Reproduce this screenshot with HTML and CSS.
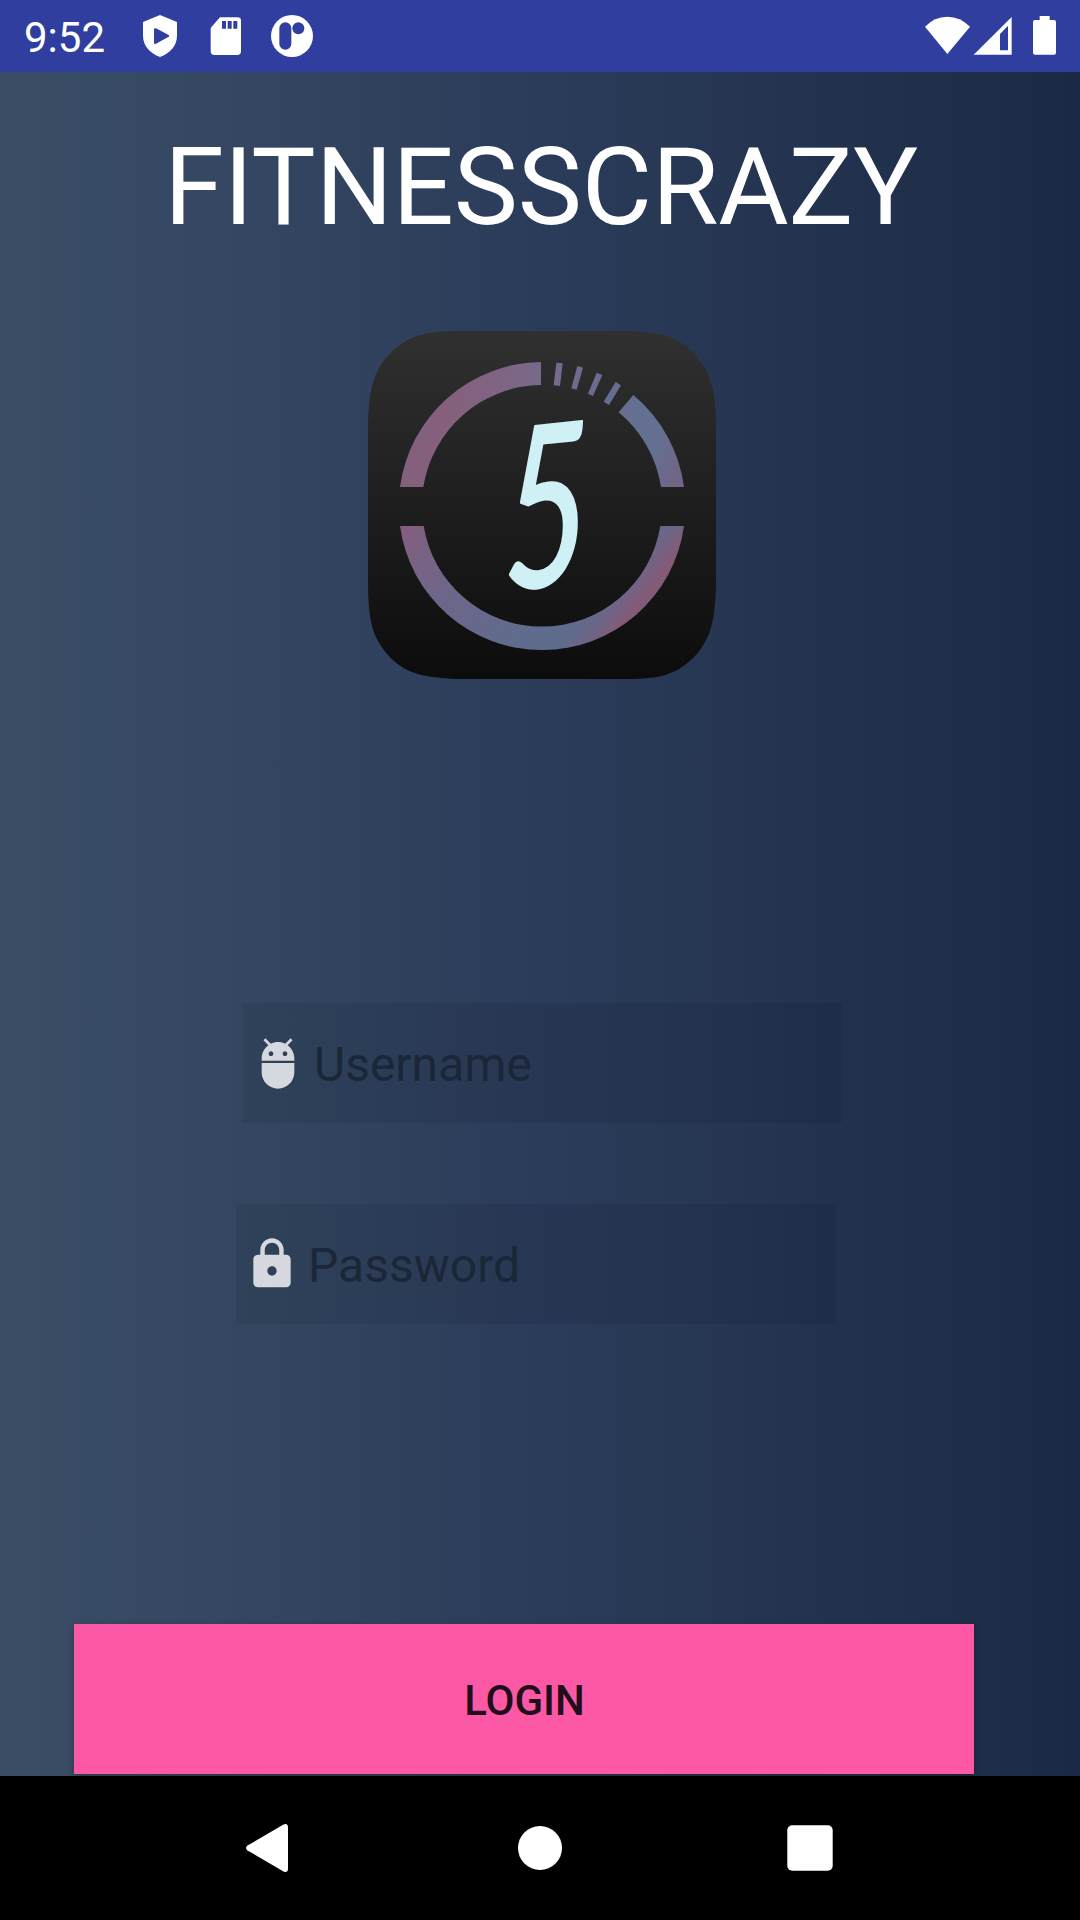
FILE: index.html
```html
<!DOCTYPE html>
<html lang="en">
<head>
<meta charset="utf-8">
<title>FitnessCrazy</title>
<link rel="stylesheet" href="styles.css">
</head>
<body>
<div class="screen">
  <header class="status">
    <span class="clock">9:52</span>
    <svg class="notices" viewBox="0 0 540 216" aria-hidden="true">
      <path fill="#fff" fill-rule="evenodd" d="M60 45L111 66V108C111 137 90 160 60 171C30 160 9 137 9 108V66ZM42 88V129Q43 134 48 131L86 110Q90 108 86 105L48 85Q43 83 42 88Z"/>
      <path fill="#fff" fill-rule="evenodd" d="M242 52H292Q303 52 303 62V154Q303 165 292 165H223Q212 165 212 154V86Q212 83 215 80L236 56Q239 52 242 52ZM246 63V86H258V63ZM263 63V86H275V63ZM280 63V86H292V63Z"/>
      <circle cx="456" cy="108" r="63" fill="#fff"/>
      <rect x="418" y="67" width="36" height="82" rx="18" fill="#303f9f"/>
      <circle cx="475" cy="85" r="18" fill="#303f9f"/>
    </svg>
    <svg class="system" viewBox="0 0 405 216" aria-hidden="true">
      <path fill="#fff" d="M0 80Q28 50 67 50T135 80L67 162Z"/>
      <path fill="#fff" fill-rule="evenodd" d="M260 51V164H146ZM249 77L225 102V151H249Z"/>
      <path fill="#fff" d="M344 48H374V60H387Q393 60 393 66V158Q393 164 387 164H330Q324 164 324 158V66Q324 60 330 60H344Z"/>
    </svg>
  </header>

  <main class="content">
    <h1 class="title">FITNESSCRAZY</h1>
    <svg class="logo" viewBox="24 33 1044 1044" role="img" aria-label="Five timer logo">
      <defs>
        <linearGradient id="plate" x1="0" y1="0" x2="0" y2="1">
          <stop offset="0" stop-color="#303030"/>
          <stop offset="1" stop-color="#0c0c0c"/>
        </linearGradient>
        <linearGradient id="upper" gradientUnits="userSpaceOnUse" x1="0" y1="0" x2="1034" y2="374">
          <stop offset=".32" stop-color="#85607d"/>
          <stop offset=".51" stop-color="#79698a"/>
          <stop offset=".65" stop-color="#6b6c8f"/>
          <stop offset=".82" stop-color="#637092"/>
          <stop offset=".88" stop-color="#637090"/>
          <stop offset=".96" stop-color="#736486"/>
        </linearGradient>
        <linearGradient id="lower" gradientUnits="userSpaceOnUse" x1="0" y1="0" x2="960" y2="720">
          <stop offset=".41" stop-color="#815f7e"/>
          <stop offset=".6" stop-color="#6b678a"/>
          <stop offset=".82" stop-color="#5f6c8e"/>
          <stop offset=".89" stop-color="#5f6b8d"/>
          <stop offset=".94" stop-color="#706486"/>
          <stop offset=".98" stop-color="#835b78"/>
        </linearGradient>
      </defs>
      <path fill="url(#plate)" d="M290 33H802C900 36 950 48 1000 98C1050 150 1068 210 1068 330V800C1064 900 1054 950 1008 1005C955 1060 910 1077 800 1077H290C190 1073 140 1062 90 1012C38 955 24 910 24 780V310C27 200 42 150 92 98C142 50 190 34 290 33Z"/>
      <path fill="url(#upper)" d="M120 501A432 432 0 0 1 543 126V195A362 362 0 0 0 190 501ZM820 225A432 432 0 0 1 972 501H903A362 362 0 0 0 776 277ZM589 128L608 130L600 198L581 196ZM652 138L669 143L650 209L634 205ZM710 158L727 165L699 228L684 221ZM767 186L783 196L747 255L731 245Z"/>
      <path fill="url(#lower)" d="M120 618H191A359.700 359.700 0 0 0 901 618H972A429.900 429.900 0 0 1 120 618Z"/>
      <text class="numeral" transform="translate(430 810) skewY(-6) scale(.67 1)">5</text>
    </svg>

    <label class="field username">
      <svg class="field-icon" viewBox="0 0 24 24" aria-hidden="true"><path d="M5 16c0 3.87 3.13 7 7 7s7-3.13 7-7v-4H5v4zM16.12 4.37l2.1-2.1-.82-.83-2.3 2.31C14.16 3.28 13.12 3 12 3s-2.16.28-3.09.75L6.6 1.44l-.82.83 2.1 2.1C6.14 5.64 5 7.68 5 10v1h14v-1c0-2.32-1.14-4.36-2.88-5.63zM9 9c-.55 0-1-.45-1-1s.45-1 1-1 1 .45 1 1-.45 1-1 1zm6 0c-.55 0-1-.45-1-1s.45-1 1-1 1 .45 1 1-.45 1-1 1z"/></svg>
      <span class="hint">Username</span>
    </label>
    <label class="field password">
      <svg class="field-icon" viewBox="0 0 24 24" aria-hidden="true"><path d="M18 8h-1V6c0-2.76-2.24-5-5-5S7 3.24 7 6v2H6c-1.1 0-2 .9-2 2v10c0 1.1.9 2 2 2h12c1.1 0 2-.9 2-2V10c0-1.1-.9-2-2-2zm-6 9c-1.1 0-2-.9-2-2s.9-2 2-2 2 .9 2 2-.9 2-2 2zm3.1-9H8.9V6c0-1.71 1.39-3.1 3.1-3.1 1.71 0 3.1 1.39 3.1 3.1v2z"/></svg>
      <span class="hint">Password</span>
    </label>
    <button class="login" type="button">LOGIN</button>
  </main>

  <nav class="navbar">
    <svg viewBox="0 0 48 48" aria-hidden="true"><path fill="#fff" d="M37.500 0.600Q41.500 -1.500 42 3V45Q41.500 49.500 37.500 47.400L1.500 26.400Q-1.500 24 1.500 21.600Z"/></svg>
    <svg viewBox="0 0 48 48" aria-hidden="true"><circle fill="#fff" cx="24" cy="24" r="22"/></svg>
    <svg viewBox="0 0 48 48" aria-hidden="true"><rect fill="#fff" x="1.300" y="1.200" width="45.400" height="45.600" rx="5"/></svg>
  </nav>
</div>
</body>
</html>
```
FILE: styles.css
```css
* { box-sizing: border-box; }

body {
  margin: 0;
  font-family: Roboto, sans-serif;
}

.screen {
  width: 1080px;
  height: 1920px;
  display: flex;
  flex-direction: column;
  overflow: hidden;
}

.status {
  height: 72px;
  flex: none;
  display: flex;
  align-items: center;
  padding: 0 20px 0 24px;
  background: #303f9f;
  color: #fff;
}

.clock {
  width: 116px;
  padding-top: 3px;
  font-size: 42px;
  line-height: 50px;
}

.notices { width: 180px; height: 72px; }
.system { width: 135px; height: 72px; margin-left: auto; }

.content {
  flex: 1;
  display: flex;
  flex-direction: column;
  align-items: flex-start;
  background: linear-gradient(90deg, #3b4e66, #2b3c5a 50%, #1b2a44);
}

.title {
  align-self: center;
  margin: 52px 0 0 2px;
  font-size: 108px;
  font-weight: 400;
  line-height: 127px;
  letter-spacing: -.15px;
  color: #fff;
}

.logo {
  width: 348px;
  height: 348px;
  margin: 80px 0 0 368px;
}

.numeral {
  font-family: Lato, sans-serif;
  font-style: italic;
  font-size: 672px;
  fill: #cff1f6;
  stroke: #cff1f6;
  stroke-width: 8px;
  stroke-linejoin: round;
}

.field {
  width: 600px;
  height: 120px;
  display: flex;
  align-items: center;
  gap: 8px;
  padding: 0 8px;
  background: rgba(0, 0, 0, .07);
  color: #1b2636;
  font-size: 48px;
}

.field-icon { width: 56px; height: 56px; fill: #d5d9df; }
.hint { padding-top: 2px; }
.username { margin: 324px 0 0 242px; }
.password { margin: 81px 0 0 236px; }

.login {
  width: 900px;
  height: 150px;
  margin: 300px 0 0 74px;
  padding: 2px 0 0 1px;
  border: 0;
  background: #fd58a6;
  box-shadow: 0 2px 6px rgba(0, 0, 0, .3);
  color: #220e1b;
  font: 500 42px Roboto, sans-serif;
}

.navbar {
  height: 144px;
  flex: none;
  display: flex;
  justify-content: center;
  align-items: center;
  gap: 222px;
  background: #000;
}

.navbar svg { width: 48px; height: 48px; overflow: visible; }
```
